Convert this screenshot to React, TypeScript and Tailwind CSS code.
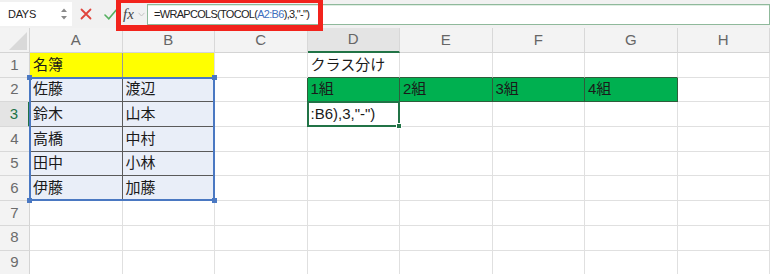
import React from 'react'

const COLS = ['A', 'B', 'C', 'D', 'E', 'F', 'G', 'H']
const COL_START = ['col-start-1', 'col-start-2', 'col-start-3', 'col-start-4', 'col-start-5', 'col-start-6', 'col-start-7', 'col-start-8', 'col-start-9']
const ROW_START = ['row-start-1', 'row-start-2', 'row-start-3', 'row-start-4', 'row-start-5', 'row-start-6', 'row-start-7', 'row-start-8', 'row-start-9', 'row-start-10']

const DATA: Record<string, string> = {
  '1,0': '名簿',
  '2,0': '佐藤',
  '2,1': '渡辺',
  '3,0': '鈴木',
  '3,1': '山本',
  '4,0': '高橋',
  '4,1': '中村',
  '5,0': '田中',
  '5,1': '小林',
  '6,0': '伊藤',
  '6,1': '加藤',
  '1,3': 'クラス分け',
  '2,3': '1組',
  '2,4': '2組',
  '2,5': '3組',
  '2,6': '4組',
  '3,3': ':B6),3,"-")',
}

function cellClass(r: number, c: number) {
  const table = r >= 2 && r <= 6 && c <= 1
  const green = r === 2 && c >= 3 && c <= 6
  const yellow = r === 1 && c <= 1

  const bg = yellow ? 'bg-[#ffff00]' : table ? 'bg-[#e9eef8]' : green ? 'bg-[#00b050]' : 'bg-white'

  let right = 'border-r-[#e0e0e0]'
  if (table) right = 'border-r-[#5a5a5a]'
  else if (green || (r === 2 && c === 2)) right = 'border-r-[#2f5c3b]'
  else if (yellow && c === 0) right = 'border-r-[#9a9a9a]'

  let bottom = 'border-b-[#e0e0e0]'
  if (table || yellow) bottom = 'border-b-[#5a5a5a]'
  else if (green || (r === 1 && c >= 3 && c <= 6)) bottom = 'border-b-[#2f5c3b]'

  return `${bg} ${right} ${bottom}`
}

function Spinner() {
  return (
    <svg width="8" height="14" viewBox="0 0 8 14" className="text-[#8a8a8a]">
      <path d="M1 5 L4 1.5 L7 5 Z" fill="currentColor" />
      <path d="M1 9 L4 12.5 L7 9 Z" fill="currentColor" />
    </svg>
  )
}

function FormulaBar() {
  return (
    <div className="relative flex h-[28px] items-center bg-[#f1f1f1] font-['Liberation_Sans',sans-serif]">
      {/* name box */}
      <div className="flex h-[24px] w-[72px] items-center justify-between bg-white pl-[8px] pr-[4px] text-[11px] tracking-[-0.3px] text-[#222]">
        <span>DAYS</span>
        <Spinner />
      </div>

      {/* cancel / enter */}
      <svg width="12" height="12" viewBox="0 0 12 12" className="ml-[8px]">
        <path d="M1.5 1.5 L10.5 10.5 M10.5 1.5 L1.5 10.5" stroke="#e0443c" strokeWidth="1.8" strokeLinecap="round" />
      </svg>
      <svg width="13" height="11" viewBox="0 0 13 11" className="ml-[12px]">
        <path d="M1 6 L4.8 9.8 L12 1.2" stroke="#55b060" strokeWidth="1.6" fill="none" strokeLinecap="round" />
      </svg>

      {/* fx */}
      <div className="ml-[6px] flex w-[24px] items-center">
        <span className="font-['Liberation_Serif',serif] text-[15px] italic leading-none text-[#444]">fx</span>
        <svg width="7" height="5" viewBox="0 0 7 5" className="ml-[4px]">
          <path d="M0.5 0.8 L3.5 4 L6.5 0.8" stroke="#c4c4c4" strokeWidth="1" fill="none" />
        </svg>
      </div>

      {/* formula input */}
      <div className="flex h-[21px] flex-1 items-center border border-[#8fb99b] bg-white pl-[6px] text-[11px] tracking-[-0.7px] text-[#222] shadow-[inset_0_1px_0_#dfeee3]">
        <span>
          =WRAPCOLS(TOCOL(<span className="text-[#3f6fbe]">A2:B6</span>),3,"-")
        </span>
      </div>

      {/* annotation */}
      <div className="pointer-events-none absolute left-[116px] top-0 z-10 h-[31px] w-[207px] border-x-[5px] border-t-[3px] border-b-[6px] border-[#f2231c]" />
    </div>
  )
}

export default function App() {
  const rows = [1, 2, 3, 4, 5, 6, 7, 8, 9]

  return (
    <div className="h-[274px] w-[770px] overflow-hidden bg-white font-['Liberation_Sans','Noto_Sans_CJK_JP',sans-serif]">
      <FormulaBar />

      <div className="grid grid-cols-[30px_repeat(8,92.5px)] grid-rows-[25px_repeat(9,24.7px)]">
        {/* corner */}
        <div className="col-start-1 row-start-1 flex items-end justify-end border-b border-r border-[#d4d4d4] bg-[#f3f3f3] pb-[2px] pr-[2px]">
          <svg width="18" height="18" viewBox="0 0 18 18">
            <path d="M18 0 L18 18 L0 18 Z" fill="#d9d9d9" />
          </svg>
        </div>

        {/* column headers */}
        {COLS.map((l, i) => (
          <div
            key={l}
            className={`${COL_START[i + 1]} row-start-1 flex items-center justify-center border-r border-[#d8d8d8] text-[15px] text-[#666] ${
              i === 3 ? 'border-b-2 border-b-[#217346] bg-[#e4e4e4]' : 'border-b border-b-[#d4d4d4] bg-[#f3f3f3]'
            }`}
          >
            {l}
          </div>
        ))}

        {rows.map((r) => (
          <React.Fragment key={r}>
            <div
              className={`${COL_START[0]} ${ROW_START[r]} flex items-center justify-center border-b border-[#d8d8d8] text-[15px] ${
                r === 3 ? 'border-r-2 border-r-[#217346] bg-[#e4e4e4] text-[#217346]' : 'border-r border-r-[#d4d4d4] bg-[#f3f3f3] text-[#6b6b6b]'
              }`}
            >
              {r}
            </div>
            {COLS.map((_, c) => (
              <div
                key={c}
                className={`${COL_START[c + 1]} ${ROW_START[r]} flex items-center overflow-hidden whitespace-nowrap border-b border-r pl-[3px] text-[15px] text-[#1a1a1a] ${cellClass(r, c)}`}
              >
                {DATA[`${r},${c}`] ?? ''}
              </div>
            ))}
          </React.Fragment>
        ))}

        {/* range reference A2:B6 */}
        <div className="pointer-events-none relative col-start-2 col-end-4 row-start-3 row-end-8 -ml-px -mt-px border-2 border-[#4a78c2]">
          <span className="absolute -left-[4px] -top-[4px] h-[5px] w-[5px] bg-[#4a78c2]" />
          <span className="absolute -right-[4px] -top-[4px] h-[5px] w-[5px] bg-[#4a78c2]" />
          <span className="absolute -bottom-[4px] -left-[4px] h-[5px] w-[5px] bg-[#4a78c2]" />
          <span className="absolute -bottom-[4px] -right-[4px] h-[5px] w-[5px] bg-[#4a78c2]" />
        </div>

        {/* active cell D3 */}
        <div className="pointer-events-none relative col-start-5 row-start-4 -ml-px -mt-px border-2 border-[#217346]">
          <span className="absolute -bottom-[4px] -right-[4px] h-[6px] w-[6px] border border-white bg-[#217346]" />
        </div>
      </div>
    </div>
  )
}
